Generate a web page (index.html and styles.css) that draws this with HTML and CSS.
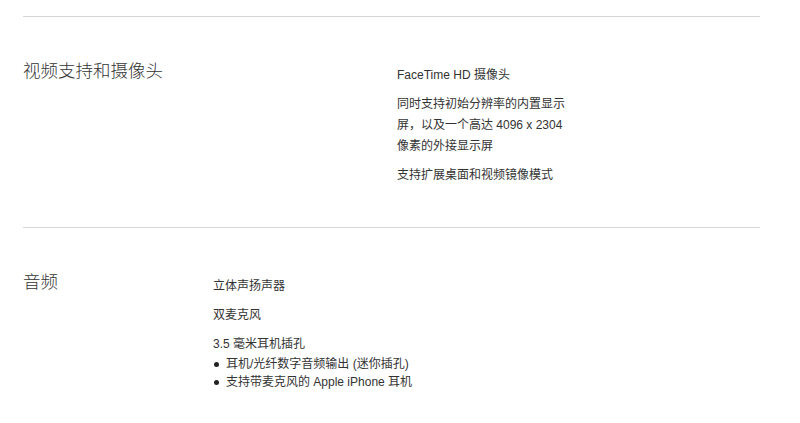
FILE: index.html
```html
<!DOCTYPE html>
<html lang="zh-CN">
<head>
<meta charset="utf-8">
<title>技术规格</title>
<link rel="stylesheet" href="styles.css">
</head>
<body>
<main class="specs">
  <section class="spec spec-video">
    <h2 class="spec-title">视频支持和摄像头</h2>
    <div class="spec-body">
      <p>FaceTime HD 摄像头</p>
      <p>同时支持初始分辨率的内置显示屏，以及一个高达 4096 x 2304 像素的外接显示屏</p>
      <p>支持扩展桌面和视频镜像模式</p>
    </div>
  </section>
  <section class="spec spec-audio">
    <h2 class="spec-title">音频</h2>
    <div class="spec-body">
      <p>立体声扬声器</p>
      <p>双麦克风</p>
      <p class="tight">3.5 毫米耳机插孔</p>
      <ul class="bullets">
        <li>耳机/光纤数字音频输出 (迷你插孔)</li>
        <li>支持带麦克风的 Apple iPhone 耳机</li>
      </ul>
    </div>
  </section>
</main>
</body>
</html>
```
FILE: styles.css
```css
html, body {
  margin: 0;
  padding: 0;
  background: #fff;
}

body {
  font-family: "Liberation Sans", "Noto Sans CJK SC", sans-serif;
  color: #333;
}

.specs {
  width: 737px;
  margin: 16px 0 0 23px;
}

.spec {
  display: grid;
  border-top: 1px solid #d6d6d6;
  padding: 39px 0 41px;
}

.spec-video {
  grid-template-columns: 374px 178px;
}

.spec-audio {
  grid-template-columns: 190px 1fr;
}

.spec-title {
  margin: 0;
  font-family: "Noto Sans CJK SC", sans-serif;
  font-size: 17.5px;
  font-weight: 300;
  line-height: 28px;
  color: #333;
}

.spec-body {
  padding-top: 9px;
  font-size: 12px;
  line-height: 21px;
}

.spec-body p {
  margin: 0 0 8px;
}

.spec-body p:last-child {
  margin-bottom: 0;
}

.spec-body p.tight {
  margin-bottom: 0;
}

.bullets {
  list-style: none;
  margin: 0;
  padding: 0;
  line-height: 18px;
}

.bullets li {
  display: flex;
  align-items: center;
  gap: 7px;
}

.bullets li::before {
  content: "";
  width: 5px;
  height: 5px;
  margin-left: 1px;
  border-radius: 50%;
  background: #222;
  flex: none;
}
```
